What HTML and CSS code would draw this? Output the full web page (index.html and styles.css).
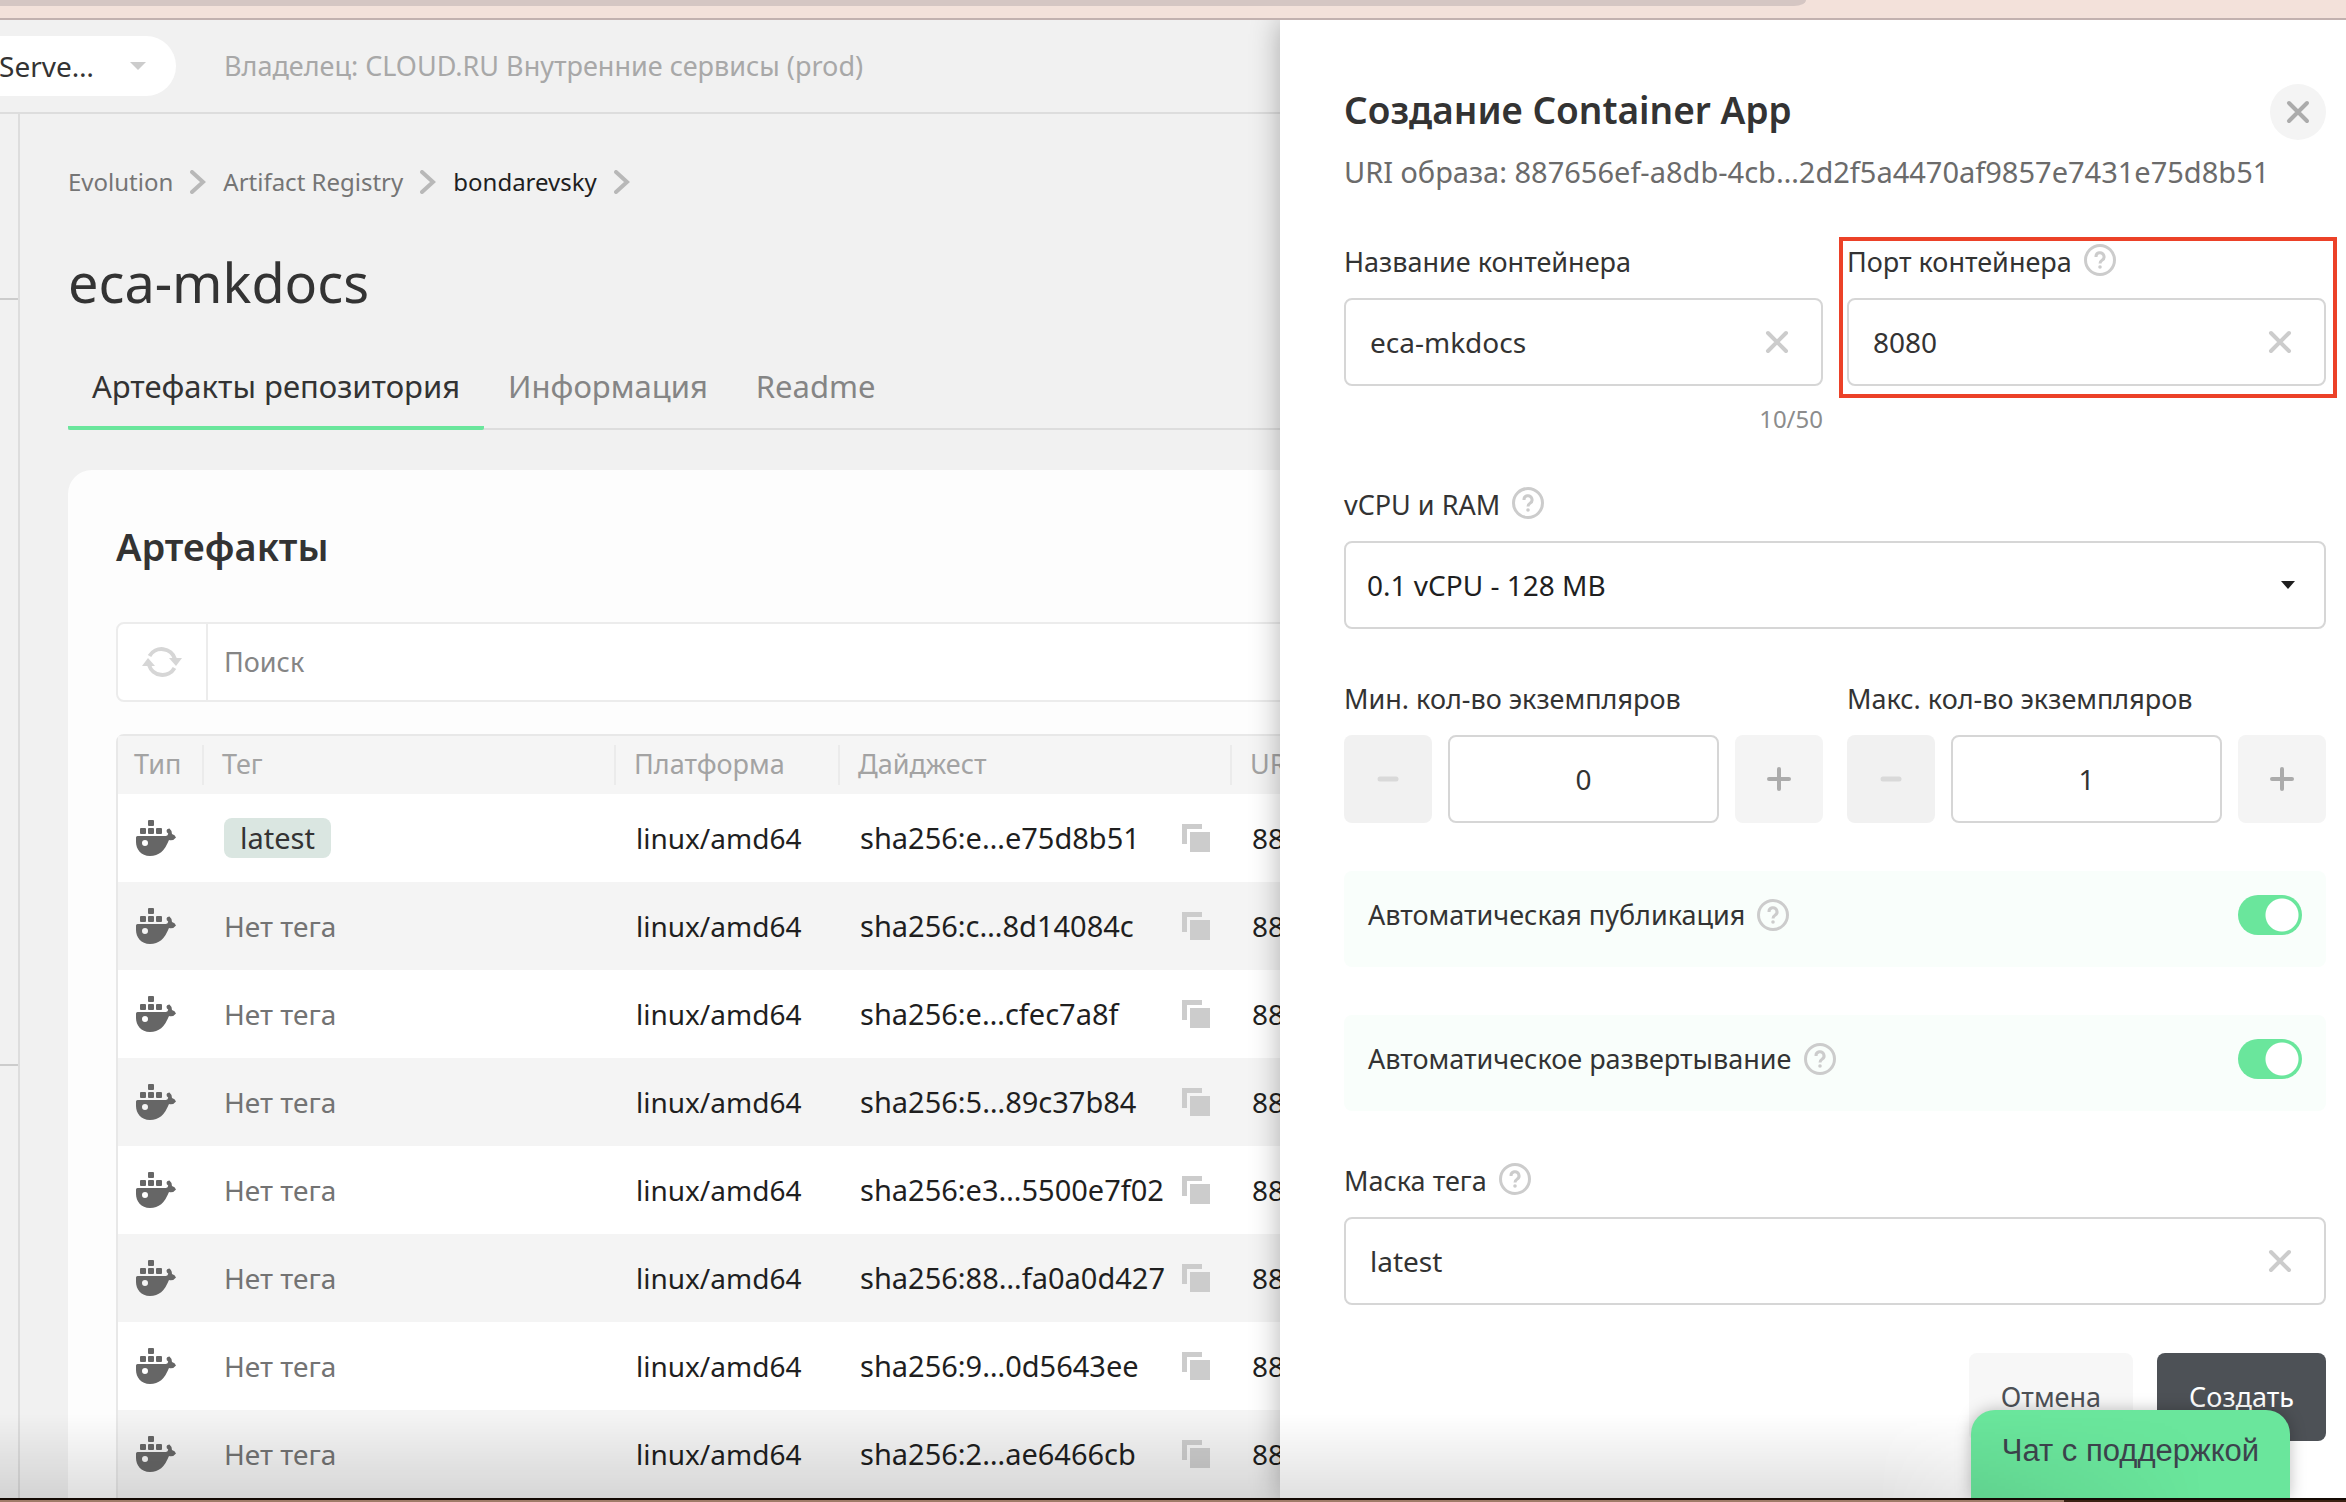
FILE: index.html
```html
<!DOCTYPE html>
<html lang="ru">
<head>
<meta charset="utf-8">
<title>eca-mkdocs</title>
<link rel="stylesheet" href="styles.css">
</head>
<body>
<svg class="sprite" aria-hidden="true">
  <symbol id="chevron" viewBox="0 0 16 24"><path d="M2 2l11 10L2 22" fill="none" stroke="currentColor" stroke-width="4" stroke-linecap="round"/></symbol>
  <symbol id="cross" viewBox="0 0 24 24"><path d="M3 3l18 18M21 3L3 21" fill="none" stroke="currentColor" stroke-width="4" stroke-linecap="round"/></symbol>
  <symbol id="help" viewBox="0 0 32 32"><circle cx="16" cy="16" r="14.500" fill="none" stroke="currentColor" stroke-width="3"/><path d="M12 13a4 4 0 1 1 6 3.200q-2 1.200-2 3.300" fill="none" stroke="currentColor" stroke-width="3"/><circle cx="16" cy="23" r="1.800" fill="currentColor"/></symbol>
  <symbol id="copy" viewBox="0 0 28 28"><path d="M0 0h20v5H5v15H0z" fill="currentColor"/><path d="M8 8h20v20H8z" fill="currentColor"/></symbol>
  <symbol id="minus" viewBox="0 0 24 24"><path d="M4 12h16" stroke="currentColor" stroke-width="5" stroke-linecap="round"/></symbol>
  <symbol id="plus" viewBox="0 0 24 24"><path d="M2 12h20M12 2v20" stroke="currentColor" stroke-width="4" stroke-linecap="round"/></symbol>
  <symbol id="docker" viewBox="0 0 40 36">
    <g fill="currentColor"><rect x="12" y="0" width="6" height="6" rx="1"/><rect x="4" y="8" width="6" height="6" rx="1"/><rect x="12" y="8" width="6" height="6" rx="1"/><rect x="20" y="8" width="6" height="6" rx="1"/>
    <path fill-rule="evenodd" d="M1.500 16H30q2-.500 2.200-2.500-2-1-1.600-3.300Q31 8.500 33.500 8.500q2.500 2 2.500 5.500 3 .500 4 3.500-2.500 3.500-7 2.500C28.500 31 23 36 14 36 5 36 0 29 0 22v-4.500Q0 16 1.500 16zM9 20a3 3 0 1 0 0 6 3 3 0 0 0 0-6z"/></g>
  </symbol>
</svg>

<div class="browser-edge"><div class="browser-bar"></div></div>

<div class="app">
  <header class="topbar">
    <button class="project" type="button"><span>Serve…</span><span class="caret"></span></button>
    <p class="owner">Владелец: CLOUD.RU Внутренние сервисы (prod)</p>
  </header>

  <div class="body">
    <aside class="rail"><hr><hr></aside>
    <main class="content">
      <nav class="crumbs">
        <a href="#">Evolution</a><svg><use href="#chevron"/></svg>
        <a href="#">Artifact Registry</a><svg><use href="#chevron"/></svg>
        <a href="#" class="current">bondarevsky</a><svg><use href="#chevron"/></svg>
      </nav>
      <h1>eca-mkdocs</h1>
      <nav class="tabs">
        <a href="#" class="active">Артефакты репозитория</a>
        <a href="#">Информация</a>
        <a href="#">Readme</a>
      </nav>

      <section class="card">
        <h2>Артефакты</h2>
        <div class="search">
          <button type="button" aria-label="Обновить">
            <svg viewBox="0 0 40 32"><g fill="none" stroke="currentColor" stroke-width="4"><path d="M7.500 10A14 14 0 0 1 33 13"/><path d="M32.500 22A14 14 0 0 1 7 19"/></g><path d="M27 12h13l-6 8zM13 20H0l6-8z" fill="currentColor"/></svg>
          </button>
          <input type="search" placeholder="Поиск" aria-label="Поиск">
        </div>
        <table>
          <colgroup><col class="c-type"><col class="c-tag"><col class="c-platform"><col class="c-digest"><col></colgroup>
          <thead><tr><th>Тип</th><th>Тег</th><th>Платформа</th><th>Дайджест</th><th>URI</th></tr></thead>
          <tbody>
            <tr><td><svg class="docker"><use href="#docker"/></svg></td><td><span class="tag">latest</span></td><td>linux/amd64</td><td><div class="digest">sha256:e…e75d8b51<svg><use href="#copy"/></svg></div></td><td>88</td></tr>
            <tr><td><svg class="docker"><use href="#docker"/></svg></td><td class="none">Нет тега</td><td>linux/amd64</td><td><div class="digest">sha256:c…8d14084c<svg><use href="#copy"/></svg></div></td><td>88</td></tr>
            <tr><td><svg class="docker"><use href="#docker"/></svg></td><td class="none">Нет тега</td><td>linux/amd64</td><td><div class="digest">sha256:e…cfec7a8f<svg><use href="#copy"/></svg></div></td><td>88</td></tr>
            <tr><td><svg class="docker"><use href="#docker"/></svg></td><td class="none">Нет тега</td><td>linux/amd64</td><td><div class="digest">sha256:5…89c37b84<svg><use href="#copy"/></svg></div></td><td>88</td></tr>
            <tr><td><svg class="docker"><use href="#docker"/></svg></td><td class="none">Нет тега</td><td>linux/amd64</td><td><div class="digest">sha256:e3…5500e7f02<svg><use href="#copy"/></svg></div></td><td>88</td></tr>
            <tr><td><svg class="docker"><use href="#docker"/></svg></td><td class="none">Нет тега</td><td>linux/amd64</td><td><div class="digest">sha256:88…fa0a0d427<svg><use href="#copy"/></svg></div></td><td>88</td></tr>
            <tr><td><svg class="docker"><use href="#docker"/></svg></td><td class="none">Нет тега</td><td>linux/amd64</td><td><div class="digest">sha256:9…0d5643ee<svg><use href="#copy"/></svg></div></td><td>88</td></tr>
            <tr><td><svg class="docker"><use href="#docker"/></svg></td><td class="none">Нет тега</td><td>linux/amd64</td><td><div class="digest">sha256:2…ae6466cb<svg><use href="#copy"/></svg></div></td><td>88</td></tr>
          </tbody>
        </table>
      </section>
    </main>
  </div>

  <aside class="drawer">
    <form>
      <div class="drawer-head">
        <h2>Создание Container App</h2>
        <button class="close" type="button" aria-label="Закрыть"><svg><use href="#cross"/></svg></button>
      </div>
      <p class="uri">URI образа: 887656ef-a8db-4cb…2d2f5a4470af9857e7431e75d8b51</p>

      <div class="pair names">
        <div class="field">
          <div class="label-row"><label for="name">Название контейнера</label></div>
          <div class="box"><input id="name" type="text" value="eca-mkdocs"><button type="button" aria-label="Очистить"><svg><use href="#cross"/></svg></button></div>
          <p class="counter">10/50</p>
        </div>
        <div class="field marked">
          <div class="label-row"><label for="port">Порт контейнера</label><svg><use href="#help"/></svg></div>
          <div class="box"><input id="port" type="text" value="8080"><button type="button" aria-label="Очистить"><svg><use href="#cross"/></svg></button></div>
        </div>
      </div>

      <div class="field cpu">
        <div class="label-row"><label for="cpu">vCPU и RAM</label><svg><use href="#help"/></svg></div>
        <div class="box"><select id="cpu"><option>0.1 vCPU - 128 MB</option></select><span class="caret"></span></div>
      </div>

      <div class="pair counts">
        <div class="field">
          <div class="label-row"><label for="min">Мин. кол-во экземпляров</label></div>
          <div class="stepper"><button type="button" disabled aria-label="Меньше"><svg><use href="#minus"/></svg></button><input id="min" type="text" value="0"><button type="button" aria-label="Больше"><svg><use href="#plus"/></svg></button></div>
        </div>
        <div class="field">
          <div class="label-row"><label for="max">Макс. кол-во экземпляров</label></div>
          <div class="stepper"><button type="button" disabled aria-label="Меньше"><svg><use href="#minus"/></svg></button><input id="max" type="text" value="1"><button type="button" aria-label="Больше"><svg><use href="#plus"/></svg></button></div>
        </div>
      </div>

      <div class="toggles">
        <div class="toggle"><label for="pub">Автоматическая публикация</label><svg><use href="#help"/></svg><input id="pub" type="checkbox" role="switch" checked></div>
        <div class="toggle"><label for="dep">Автоматическое развертывание</label><svg><use href="#help"/></svg><input id="dep" type="checkbox" role="switch" checked></div>
      </div>

      <div class="field mask">
        <div class="label-row"><label for="mask">Маска тега</label><svg><use href="#help"/></svg></div>
        <div class="box"><input id="mask" type="text" value="latest"><button type="button" aria-label="Очистить"><svg><use href="#cross"/></svg></button></div>
      </div>

      <div class="actions">
        <button class="cancel" type="button">Отмена</button>
        <button class="create" type="submit">Создать</button>
      </div>
    </form>
  </aside>

  <button class="chat" type="button">Чат с поддержкой</button>
  <div class="shade"></div>
</div>

<div class="screen-edge"></div>
</body>
</html>
```

FILE: styles.css
```css
*, ::before, ::after { box-sizing: border-box; margin: 0; }

body {
  display: flex;
  flex-direction: column;
  height: 100vh;
  overflow: hidden;
  font: 28px/40px "Noto Sans", sans-serif;
  color: #333;
}

button, input, select { font: inherit; color: inherit; border: 0; background: none; padding: 0; min-width: 0; }
a { color: inherit; text-decoration: none; }
svg { flex: none; display: block; }
.sprite { position: absolute; width: 0; height: 0; }

.browser-edge { flex: none; height: 20px; background: #f3e1da; border-bottom: 2px solid #c2b1af; }
.browser-bar { width: 77%; height: 6px; background: #d5c6c3; border-bottom-right-radius: 12px 6px; }
.screen-edge {
  flex: none;
  height: 4px;
  border-top: 2px solid #140a04;
  background: linear-gradient(90deg, #a07c69 88%, #3a2012 88%);
}

.app { position: relative; flex: 1; min-height: 0; display: flex; flex-direction: column; overflow: hidden; background: #f1f1f1; }

.topbar { flex: none; display: flex; align-items: center; gap: 48px; height: 94px; border-bottom: 2px solid #ddd; }
.project { display: flex; align-items: center; justify-content: flex-end; gap: 36px; width: 176px; height: 60px; padding-right: 30px; background: #fff; border-radius: 0 30px 30px 0; white-space: nowrap; }
.caret { flex: none; border: 8px solid transparent; border-top-color: currentColor; border-bottom: 0; }
.project .caret { color: #ccc; }
.owner { font-size: 27px; color: #a8a8a8; white-space: nowrap; }

.body { flex: 1; display: flex; min-height: 0; }
.rail { flex: none; width: 20px; border-right: 2px solid #ddd; padding-top: 184px; }
.rail hr { border: 0; border-top: 2px solid #ccc; margin-bottom: 764px; }

.content { flex: 1; min-width: 0; padding: 48px 0 0 48px; }
.crumbs { display: flex; align-items: center; gap: 17px; height: 40px; font-size: 24px; color: #757575; }
.crumbs svg { width: 16px; height: 24px; color: #b8b8b8; }
.crumbs .current { color: #1f1f1f; }
h1 { margin-top: 42px; font-size: 54px; line-height: 76px; font-weight: 400; }
.tabs { display: flex; height: 70px; margin-top: 40px; border-bottom: 2px solid #ddd; font-size: 31px; color: #858585; }
.tabs a { height: 70px; padding: 6px 24px; }
.tabs .active { color: #333; border-bottom: 4px solid #6ae69c; border-radius: 2px; }

.card { margin-top: 40px; padding: 48px; background: #fdfdfd; border-radius: 24px; }
h2 { font-size: 38px; line-height: 56px; font-weight: 600; }
.search { display: flex; height: 80px; margin-top: 48px; border: 2px solid #ececec; border-radius: 8px; background: #fff; }
.search button { display: grid; place-items: center; width: 90px; border-right: 2px solid #ececec; color: #d6d6d6; }
.search button svg { width: 40px; height: 32px; }
.search input { flex: 1; padding: 0 16px; font-size: 27px; }
.search input::placeholder { color: #858585; opacity: 1; }

table { width: 100%; margin-top: 32px; table-layout: fixed; border-collapse: separate; border-spacing: 0; border: 2px solid #e8e8e8; border-radius: 8px 8px 0 0; background: #fff; color: #1f1f1f; }
.c-type { width: 86px; }
.c-tag { width: 412px; }
.c-platform { width: 224px; }
.c-digest { width: 392px; }
th { height: 58px; padding: 0 18px 2px; background: linear-gradient(#ebebeb, #ebebeb) right / 2px 40px no-repeat #f5f5f5; font-size: 27px; font-weight: 400; text-align: left; color: #a3a3a3; }
th:first-child { padding-left: 16px; }
td { height: 88px; padding: 0 20px; }
tr:nth-child(even) td { background: #f4f4f4; }
.docker { width: 40px; height: 36px; color: #666; margin-left: -2px; }
.none { color: #737373; }
.tag { display: inline-block; padding: 0 16px; border-radius: 8px; background: #dae6e1; font-size: 29px; color: #333; }
.digest { display: flex; align-items: center; justify-content: space-between; padding-right: 2px; font-size: 29px; white-space: nowrap; }
.digest svg { width: 28px; height: 28px; color: #ccc; }

.drawer { position: absolute; top: 0; right: 0; bottom: 0; width: 1066px; padding: 60px 20px 0 64px; background: #fff; box-shadow: 0 0 28px rgba(0, 0, 0, .3); overflow: hidden; }
.drawer-head { display: flex; align-items: center; justify-content: space-between; height: 64px; }
.drawer-head h2 { height: 60px; font-size: 37px; }
.close { display: grid; place-items: center; width: 56px; height: 56px; border-radius: 50%; background: #f4f4f4; color: #ababab; }
.close svg, .box svg { width: 24px; height: 24px; }
.uri { margin-top: 8px; font-size: 29px; color: #6b6b6b; white-space: nowrap; }

.pair { display: grid; grid-template-columns: repeat(2, minmax(0, 1fr)); gap: 24px; }
.label-row { display: flex; align-items: flex-start; gap: 12px; height: 56px; font-size: 27px; }
.label-row svg { margin-top: 2px; }
.label-row svg, .toggle svg { width: 32px; height: 32px; color: #ccc; }
.box { display: flex; align-items: center; height: 88px; border: 2px solid #d6d6d6; border-radius: 8px; }
.box input, .box select { flex: 1; height: 84px; padding-left: 24px; }
.box select { appearance: none; padding-left: 21px; color: #1f1f1f; }
.box .caret { margin-right: 29px; color: #1f1f1f; border-width: 8px 7px 0; }
.box button { flex: none; width: 64px; color: #ccc; padding-left: 8px; }
.counter { margin-top: 13px; font-size: 24px; text-align: right; color: #8c8c8c; }
.names { margin-top: 50px; }
.marked { position: relative; }
.marked::after { content: ""; position: absolute; left: -8px; right: -11px; top: -5px; height: 161px; border: 4px solid #ec4128; }
.cpu { margin-top: 46px; }
.counts { margin-top: 50px; }
.stepper { display: flex; gap: 16px; }
.stepper button { display: grid; place-items: center; flex: none; width: 88px; height: 88px; border-radius: 8px; background: #f4f4f4; color: #ababab; }
.stepper button:disabled { background: #f1f1f1; color: #d9d9d9; }
.stepper svg { width: 24px; height: 24px; }
.stepper input { flex: 1; height: 88px; border: 2px solid #d6d6d6; border-radius: 8px; text-align: center; }

.toggles { display: grid; gap: 48px; margin-top: 48px; }
.toggle { display: flex; align-items: center; gap: 12px; height: 96px; padding: 0 24px 8px; border-radius: 8px; background: #f9fefb; font-size: 27px; }
.toggle input { appearance: none; width: 64px; height: 40px; margin-left: auto; border-radius: 20px; background: radial-gradient(circle at 44px 20px, #fff 16px, transparent 17px) #6ae69c; }
.mask { margin-top: 50px; }
.actions { display: flex; justify-content: flex-end; gap: 24px; margin-top: 48px; }
.actions button { height: 88px; padding: 0 32px; border-radius: 8px; font-size: 27px; }
.cancel { background: #f7f7f7; color: #4d5156; }
.create { background: #4d5156; color: #fff; }

.chat { position: absolute; right: 56px; bottom: 0; width: 319px; height: 88px; padding-bottom: 6px; border-radius: 24px 24px 0 0; background: #6ae69c; color: #3d444d; font: 31px/40px "Liberation Sans", sans-serif; white-space: nowrap; box-shadow: 0 0 16px rgba(0, 0, 0, .25); }
.shade { position: absolute; left: 0; right: 0; bottom: 0; height: 84px; pointer-events: none; background: linear-gradient(transparent, rgba(0, 0, 0, .12)); mask-image: linear-gradient(90deg, #000 80%, transparent 94%); }
```
